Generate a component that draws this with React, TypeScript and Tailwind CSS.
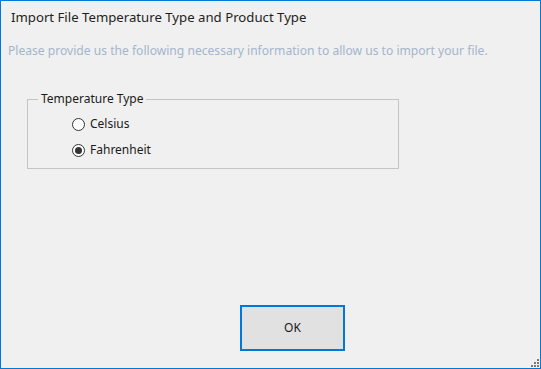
import { useState } from "react"

const font = { fontFamily: '"Noto Sans", "Open Sans", sans-serif' }

function Radio({ label, checked, onSelect }: { label: string; checked: boolean; onSelect: () => void }) {
  return (
    <button type="button" onClick={onSelect} className="flex items-center gap-[5px] h-[16px] text-left">
      <span className="w-[13px] h-[13px] rounded-full border border-[#333333] bg-white flex items-center justify-center">
        {checked && <span className="w-[7px] h-[7px] rounded-full bg-[#333333]" />}
      </span>
      <span className="text-[12px] text-[#1a1a1a] leading-[16px]">{label}</span>
    </button>
  )
}

export default function App() {
  const [unit, setUnit] = useState("fahrenheit")

  return (
    <div
      style={font}
      className="w-[541px] h-[369px] bg-[#f0f0f0] border border-[#0078d7] flex flex-col relative overflow-hidden"
    >
      <div className="pl-[10px] pt-[7px] text-[13.2px] leading-[18px] text-[#1e1e1e]">
        Import File Temperature Type and Product Type
      </div>
      <div className="pl-[7px] mt-[17px] text-[12.1px] leading-[16px] text-[#a3b5cc]">
        Please provide us the following necessary information to allow us to import your file.
      </div>

      <fieldset className="ml-[26px] mt-[32px] w-[372px] h-[78px] border border-[#c4c4c4] px-0 pb-0 pt-0">
        <legend className="ml-[10px] px-[3px] text-[12px] leading-[16px] text-[#1a1a1a]">Temperature Type</legend>
        <div className="pl-[44px] pt-[9px] flex flex-col gap-[10px]">
          <Radio label="Celsius" checked={unit === "celsius"} onSelect={() => setUnit("celsius")} />
          <Radio label="Fahrenheit" checked={unit === "fahrenheit"} onSelect={() => setUnit("fahrenheit")} />
        </div>
      </fieldset>

      <div className="flex-1" />

      <div className="pl-[239px] pb-[17px]">
        <button
          type="button"
          className="w-[105px] h-[46px] border-2 border-[#0078d7] bg-[#e1e1e1] text-[12px] text-[#1a1a1a]"
        >
          OK
        </button>
      </div>

      <svg className="absolute right-0 bottom-0" width="10" height="10" viewBox="0 0 10 10">
        <rect x="7" y="1" width="2" height="2" fill="#7a7a7a" />
        <rect x="4" y="4" width="2" height="2" fill="#7a7a7a" />
        <rect x="7" y="4" width="2" height="2" fill="#7a7a7a" />
        <rect x="1" y="7" width="2" height="2" fill="#7a7a7a" />
        <rect x="4" y="7" width="2" height="2" fill="#7a7a7a" />
        <rect x="7" y="7" width="2" height="2" fill="#7a7a7a" />
      </svg>
    </div>
  )
}
